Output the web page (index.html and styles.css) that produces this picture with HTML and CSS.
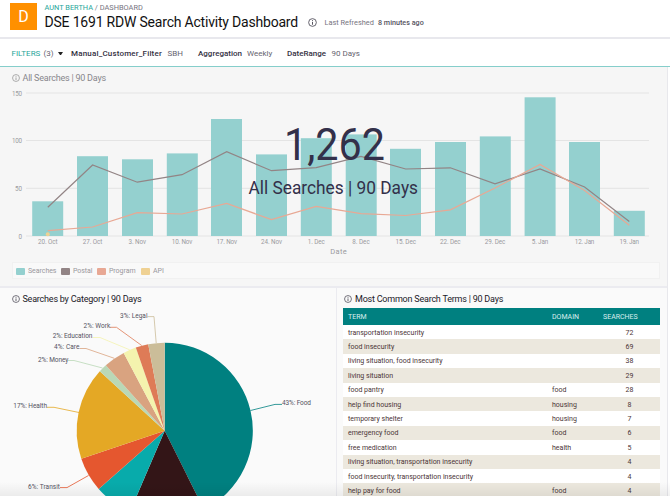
FILE: index.html
```html
<!DOCTYPE html>
<html lang="en">
<head>
  <meta charset="UTF-8" />
  <meta name="viewport" content="width=device-width, initial-scale=1.0"/>
  <title>DSE 1691 RDW Search Activity Dashboard</title>
  <link rel="stylesheet" href="styles.css">
</head>
<body>

  <svg class="defs" width="0" height="0">
    <symbol id="info" viewBox="0 0 10 10">
      <circle cx="5" cy="5" r="4.3" fill="none" stroke="currentColor" stroke-width="1"/>
      <path d="M5 4.3V7.5M5 2.4V3.4" stroke="currentColor" stroke-width="1.1"/>
    </symbol>
  </svg>

  <header>
    <div class="logo">D</div>
    <div class="heading">
      <div class="breadcrumb"><a>AUNT BERTHA</a> / DASHBOARD</div>
      <div class="title-row">
        <h1>DSE 1691 RDW Search Activity Dashboard</h1>
        <svg class="info"><use href="#info"/></svg>
        <span class="refreshed">Last Refreshed</span>
        <strong class="ago">8 minutes ago</strong>
      </div>
    </div>
  </header>

  <div class="filters">
    <span class="filter-label">FILTERS</span>
    <span class="filter-count">(3)</span>
    <span class="caret"></span>
    <b class="f-customer">Manual_Customer_Filter</b><span class="v-customer">SBH</span>
    <b class="f-aggregation">Aggregation</b><span class="v-aggregation">Weekly</span>
    <b class="f-range">DateRange</b><span class="v-range">90 Days</span>
  </div>

  <main>
    <section class="panel searches">
      <h2><svg class="info"><use href="#info"/></svg>All Searches | 90 Days</h2>
      <svg class="chart" viewBox="0 86 667 172" width="667" height="172">
        <g stroke="#e4e4e4" stroke-width="1">
          <path d="M26 93H649M26 140.5H649M26 188.3H649M26 236H649"/>
        </g>
        <g fill="#94d0cf">
          <rect x="32.2" y="201.3" width="31" height="34.7"/>
          <rect x="77" y="156.2" width="31" height="79.8"/>
          <rect x="122" y="159.3" width="31" height="76.7"/>
          <rect x="166.8" y="153.4" width="31" height="82.6"/>
          <rect x="211" y="119" width="31" height="117"/>
          <rect x="256" y="154.4" width="31" height="81.6"/>
          <rect x="300.8" y="138.2" width="31" height="97.8"/>
          <rect x="345.7" y="134.4" width="31" height="101.6"/>
          <rect x="390" y="148.8" width="31" height="87.2"/>
          <rect x="435" y="142" width="31" height="94"/>
          <rect x="479.8" y="136.4" width="31" height="99.6"/>
          <rect x="524.6" y="97.3" width="31" height="138.7"/>
          <rect x="569" y="142" width="31" height="94"/>
          <rect x="613.8" y="210.8" width="31" height="25.2"/>
        </g>
        <polyline class="postal" points="47.8,207.3 92.6,165 137.3,182.2 182,174.7 226.7,151.7 271.5,170.7 316.2,167.7 361,156.3 405.7,169 450.3,167.8 495,183.9 540,169 584.6,187 629.3,221.5"/>
        <polyline class="program" points="47.8,230.7 92.6,227 137.3,212.6 182,214 226.7,203.4 271.5,219.6 316.2,206.4 361,213.6 405.7,215.5 450.3,209.8 495,188 540,164.5 584.6,190.5 629.3,225.3"/>
        <circle cx="47.8" cy="234.3" r="2" fill="#efd193"/>
        <g class="ticks" text-anchor="end">
          <text x="22" y="95.6" textLength="10">150</text>
          <text x="22" y="143.2" textLength="10">100</text>
          <text x="22" y="191" textLength="7">50</text>
          <text x="22" y="238.6">0</text>
        </g>
        <g class="ticks" text-anchor="middle">
          <text x="47.8" y="243.8" textLength="19.5">20. Oct</text>
          <text x="92.6" y="243.8" textLength="19.5">27. Oct</text>
          <text x="137.3" y="243.8" textLength="17.5">3. Nov</text>
          <text x="182" y="243.8" textLength="20.5">10. Nov</text>
          <text x="226.7" y="243.8" textLength="20.5">17. Nov</text>
          <text x="271.5" y="243.8" textLength="21">24. Nov</text>
          <text x="316.2" y="243.8" textLength="17">1. Dec</text>
          <text x="361" y="243.8" textLength="17.5">8. Dec</text>
          <text x="405.7" y="243.8" textLength="20.5">15. Dec</text>
          <text x="450.3" y="243.8" textLength="20.5">22. Dec</text>
          <text x="495" y="243.8" textLength="20.5">29. Dec</text>
          <text x="540" y="243.8" textLength="16.5">5. Jan</text>
          <text x="584.6" y="243.8" textLength="19.5">12. Jan</text>
          <text x="629.3" y="243.8" textLength="19.5">19. Jan</text>
        </g>
        <text class="axis-title" x="338.5" y="254.4" text-anchor="middle" textLength="16.5">Date</text>
      </svg>
      <div class="summary">
        <svg viewBox="240 110 190 90" width="190" height="90">
          <text class="total" x="284" y="160" textLength="101" lengthAdjust="spacingAndGlyphs">1,262</text>
          <text class="caption" x="248.5" y="193.5" textLength="169.5" lengthAdjust="spacingAndGlyphs">All Searches | 90 Days</text>
        </svg>
      </div>
      <div class="legend">
        <span class="l-searches"><i></i>Searches</span>
        <span class="l-postal"><i></i>Postal</span>
        <span class="l-program"><i></i>Program</span>
        <span class="l-api"><i></i>API</span>
      </div>
    </section>

    <div class="columns">
      <section class="panel category">
        <h2><svg class="info"><use href="#info"/></svg>Searches by Category | 90 Days</h2>
        <svg class="pie" viewBox="0 308 336 188" width="336" height="188">
          <path fill="#008080" d="M164.7 430.7V342.7A88 88 0 0 1 204 509.5Z"/>
          <path fill="#331517" d="M164.7 430.7L204 509.5A88 88 0 0 1 130 511.6Z"/>
          <path fill="#08abab" d="M164.7 430.7L130 511.6A88 88 0 0 1 98.7 488.9Z"/>
          <path fill="#e5572f" d="M164.7 430.7L98.7 488.9A88 88 0 0 1 81.3 458.8Z"/>
          <path fill="#e4a825" d="M164.7 430.7L81.3 458.8A88 88 0 0 1 99.8 371.2Z"/>
          <path fill="#bad8b6" d="M164.7 430.7L99.8 371.2A88 88 0 0 1 105.8 365.3Z"/>
          <path fill="#d9a380" d="M164.7 430.7L105.8 365.3A88 88 0 0 1 123.7 352.9Z"/>
          <path fill="#f4f3ae" d="M164.7 430.7L123.7 352.9A88 88 0 0 1 135.8 347.6Z"/>
          <path fill="#de7b57" d="M164.7 430.7L135.8 347.6A88 88 0 0 1 148.2 344.3Z"/>
          <path fill="#cbbd99" d="M164.7 430.7L148.2 344.3A88 88 0 0 1 164.7 342.7Z"/>
          <g fill="none" stroke-width="0.8">
            <path stroke="#008080" d="M250.5 410.5L275 404.4H282"/>
            <path stroke="#e5572f" d="M88.5 475.5L67 487.6H60"/>
            <path stroke="#e4a825" d="M79 412.5L54 407.3H47"/>
            <path stroke="#bad8b6" d="M102.5 368L74 360.5H68"/>
            <path stroke="#d9a380" d="M114.3 358.3L86 348.5H79.5"/>
            <path stroke="#f4f3ae" d="M129.7 349.8L100 337.5H92.5"/>
            <path stroke="#de7b57" d="M141.7 345.5L116.5 327.3H110"/>
            <path stroke="#cbbd99" d="M156.2 343L154 316.6H147.5"/>
          </g>
          <g class="slices">
            <text x="282" y="405" textLength="29">43%: Food</text>
            <text x="28" y="488.7" textLength="32">6%: Transit</text>
            <text x="13.3" y="408" textLength="33.7">17%: Health</text>
            <text x="38" y="362" textLength="30.3">2%: Money</text>
            <text x="54" y="349" textLength="25.5">4%: Care</text>
            <text x="52.7" y="338.2" textLength="39.7">2%: Education</text>
            <text x="83.6" y="327.8" textLength="26.7">2%: Work</text>
            <text x="120" y="317.5" textLength="27.5">3%: Legal</text>
          </g>
        </svg>
      </section>

      <section class="panel terms">
        <h2><svg class="info"><use href="#info"/></svg>Most Common Search Terms | 90 Days</h2>
        <table>
          <thead>
            <tr><th>TERM</th><th>DOMAIN</th><th>SEARCHES</th></tr>
          </thead>
          <tbody>
            <tr><td>transportation insecurity</td><td></td><td>72</td></tr>
            <tr><td>food insecurity</td><td></td><td>69</td></tr>
            <tr><td>living situation, food insecurity</td><td></td><td>38</td></tr>
            <tr><td>living situation</td><td></td><td>29</td></tr>
            <tr><td>food pantry</td><td>food</td><td>28</td></tr>
            <tr><td>help find housing</td><td>housing</td><td>8</td></tr>
            <tr><td>temporary shelter</td><td>housing</td><td>7</td></tr>
            <tr><td>emergency food</td><td>food</td><td>6</td></tr>
            <tr><td>free medication</td><td>health</td><td>5</td></tr>
            <tr><td>living situation, transportation insecurity</td><td></td><td>4</td></tr>
            <tr><td>food insecurity, transportation insecurity</td><td></td><td>4</td></tr>
            <tr><td>help pay for food</td><td>food</td><td>4</td></tr>
          </tbody>
        </table>
      </section>
    </div>
  </main>

  <div class="fade"></div>

</body>
</html>
```

FILE: styles.css
```css
* {
  box-sizing: border-box;
}

body {
  font-family: Roboto, 'Liberation Sans', sans-serif;
  margin: 0;
  width: 670px;
  height: 496px;
  overflow: hidden;
  position: relative;
  background: #fff;
  color: #33303f;
}

.defs {
  display: block;
}

.info {
  display: block;
  flex: none;
  width: 8px;
  height: 8px;
  margin-right: 3px;
  color: #55535f;
}

/* Header */
header {
  display: flex;
  height: 39px;
  padding: 3px 0 0 10px;
  border-bottom: 2px solid #e8e8ed;
}

.logo {
  width: 27px;
  height: 27px;
  margin-right: 7.5px;
  background: #ff9000;
  color: white;
  font-size: 16px;
  line-height: 28px;
  text-align: center;
}

.breadcrumb {
  height: 9px;
  font-size: 7.4px;
  line-height: 10px;
  color: #77757f;
}

.breadcrumb a {
  color: #27a69b;
}

.title-row {
  display: flex;
  align-items: center;
  height: 20px;
  white-space: nowrap;
}

h1 {
  margin: 0;
  width: 263.5px;
  font-size: 14px;
  font-weight: 400;
  letter-spacing: -0.2px;
  color: #111;
}

.title-row .info {
  width: 9px;
  height: 9px;
  margin-right: 7.5px;
}

.refreshed {
  width: 53.5px;
  padding-top: 1px;
  font-size: 7.4px;
  color: #77757f;
}

.ago {
  padding-top: 1px;
  font-size: 7.2px;
  font-weight: 500;
  color: #55535f;
}

/* Filter bar */
.filters {
  display: flex;
  align-items: center;
  height: 28px;
  padding: 2px 0 0 11.5px;
  border-bottom: 1px solid #85cecb;
  font-size: 8px;
  white-space: nowrap;
  color: #66646f;
}

.filters b {
  font-weight: 500;
  color: #33303f;
}

.filter-label {
  width: 32px;
  color: #27a69b;
}

.filter-count {
  width: 14.5px;
}

.caret {
  width: 5px;
  margin-right: 8px;
  border: 2.5px solid transparent;
  border-top: 3.5px solid #222;
  border-bottom: 0;
}

.f-customer {
  width: 96.5px;
  letter-spacing: 0.18px;
}

.v-customer { width: 30.5px; }
.f-aggregation { width: 49px; }
.v-aggregation { width: 40px; }
.f-range { width: 44.5px; }

/* Panels */
main {
  width: 668px;
  border-right: 1px solid #e8e8ec;
}

h2 {
  display: flex;
  align-items: center;
  margin: 0;
  font-size: 9px;
  font-weight: 400;
  letter-spacing: -0.22px;
  white-space: nowrap;
  color: #222028;
}

.searches {
  position: relative;
  height: 219px;
  background: #f6f6f6;
}

.searches h2 {
  height: 19px;
  padding: 3px 0 0 11.5px;
  color: #88878c;
}

.searches .info {
  color: #999;
}

.chart {
  display: block;
}

.postal,
.program {
  fill: none;
  stroke: #928485;
  stroke-width: 1.2;
}

.program {
  stroke: #e8a894;
}

.ticks {
  font-size: 6.3px;
  fill: #9b9b9f;
}

.axis-title {
  font-size: 7.5px;
  fill: #9b9b9f;
}

/* Big number laid over the chart */
.summary {
  position: absolute;
  top: 43px;
  left: 240px;
}

.total {
  font-size: 45px;
  font-weight: 400;
  fill: #33304a;
}

.caption {
  font-size: 17.5px;
  fill: #33304a;
}

.legend {
  display: flex;
  align-items: center;
  width: 648px;
  height: 17px;
  margin: 4px 0 0 12px;
  padding: 1px 0 0 3px;
  border: 1px solid #f1f1f1;
  background: #f9f9f9;
  font-size: 7px;
  letter-spacing: -0.05px;
  color: #99989d;
}

.legend span {
  display: flex;
  align-items: center;
}

.legend i {
  width: 9px;
  height: 7px;
  margin-right: 3px;
  border-radius: 1px;
}

.l-searches { width: 45px; }
.l-postal { width: 36px; }
.l-program { width: 44px; }
.l-searches i { background: #94d0cf; }
.l-postal i { background: #928485; }
.l-program i { background: #e8a894; }
.l-api i { background: #efd193; }

.columns {
  display: flex;
  border-top: 2px solid #ebebf0;
}

.columns .panel {
  height: 208px;
  background: #fafafa;
}

.columns h2 {
  height: 20px;
  padding-top: 1px;
}

.category {
  width: 337px;
  border-right: 1px solid #ebebf0;
}

.category h2 {
  padding-left: 11.5px;
}

.pie {
  display: block;
}

.slices {
  font-size: 6.5px;
  fill: #55535f;
}

.terms {
  flex: 1;
}

.terms h2 {
  padding-left: 7px;
}

/* Search terms table */
table {
  width: 317px;
  margin-left: 6px;
  table-layout: fixed;
  border-collapse: collapse;
  font-size: 7px;
  color: #4b3537;
}

th,
td {
  height: 14.4px;
  padding: 1px 0 0 5px;
  line-height: 10px;
  text-align: left;
  white-space: nowrap;
}

th {
  height: 17px;
  background: #008080;
  color: #d9eeee;
  font-weight: 400;
}

th:nth-child(2) {
  width: 49px;
}

th:nth-child(3) {
  width: 64px;
  padding-left: 7px;
}

td:nth-child(3) {
  padding: 1px 0 0 3px;
  text-align: center;
}

tbody tr {
  background: white;
}

tbody tr:nth-child(even) {
  background: #ece8de;
}

/* Soft shadow along the bottom edge */
.fade {
  position: absolute;
  left: 0;
  right: 0;
  bottom: 0;
  height: 14px;
  background: linear-gradient(rgba(0,0,0,0), rgba(0,0,0,0.06));
}
```
